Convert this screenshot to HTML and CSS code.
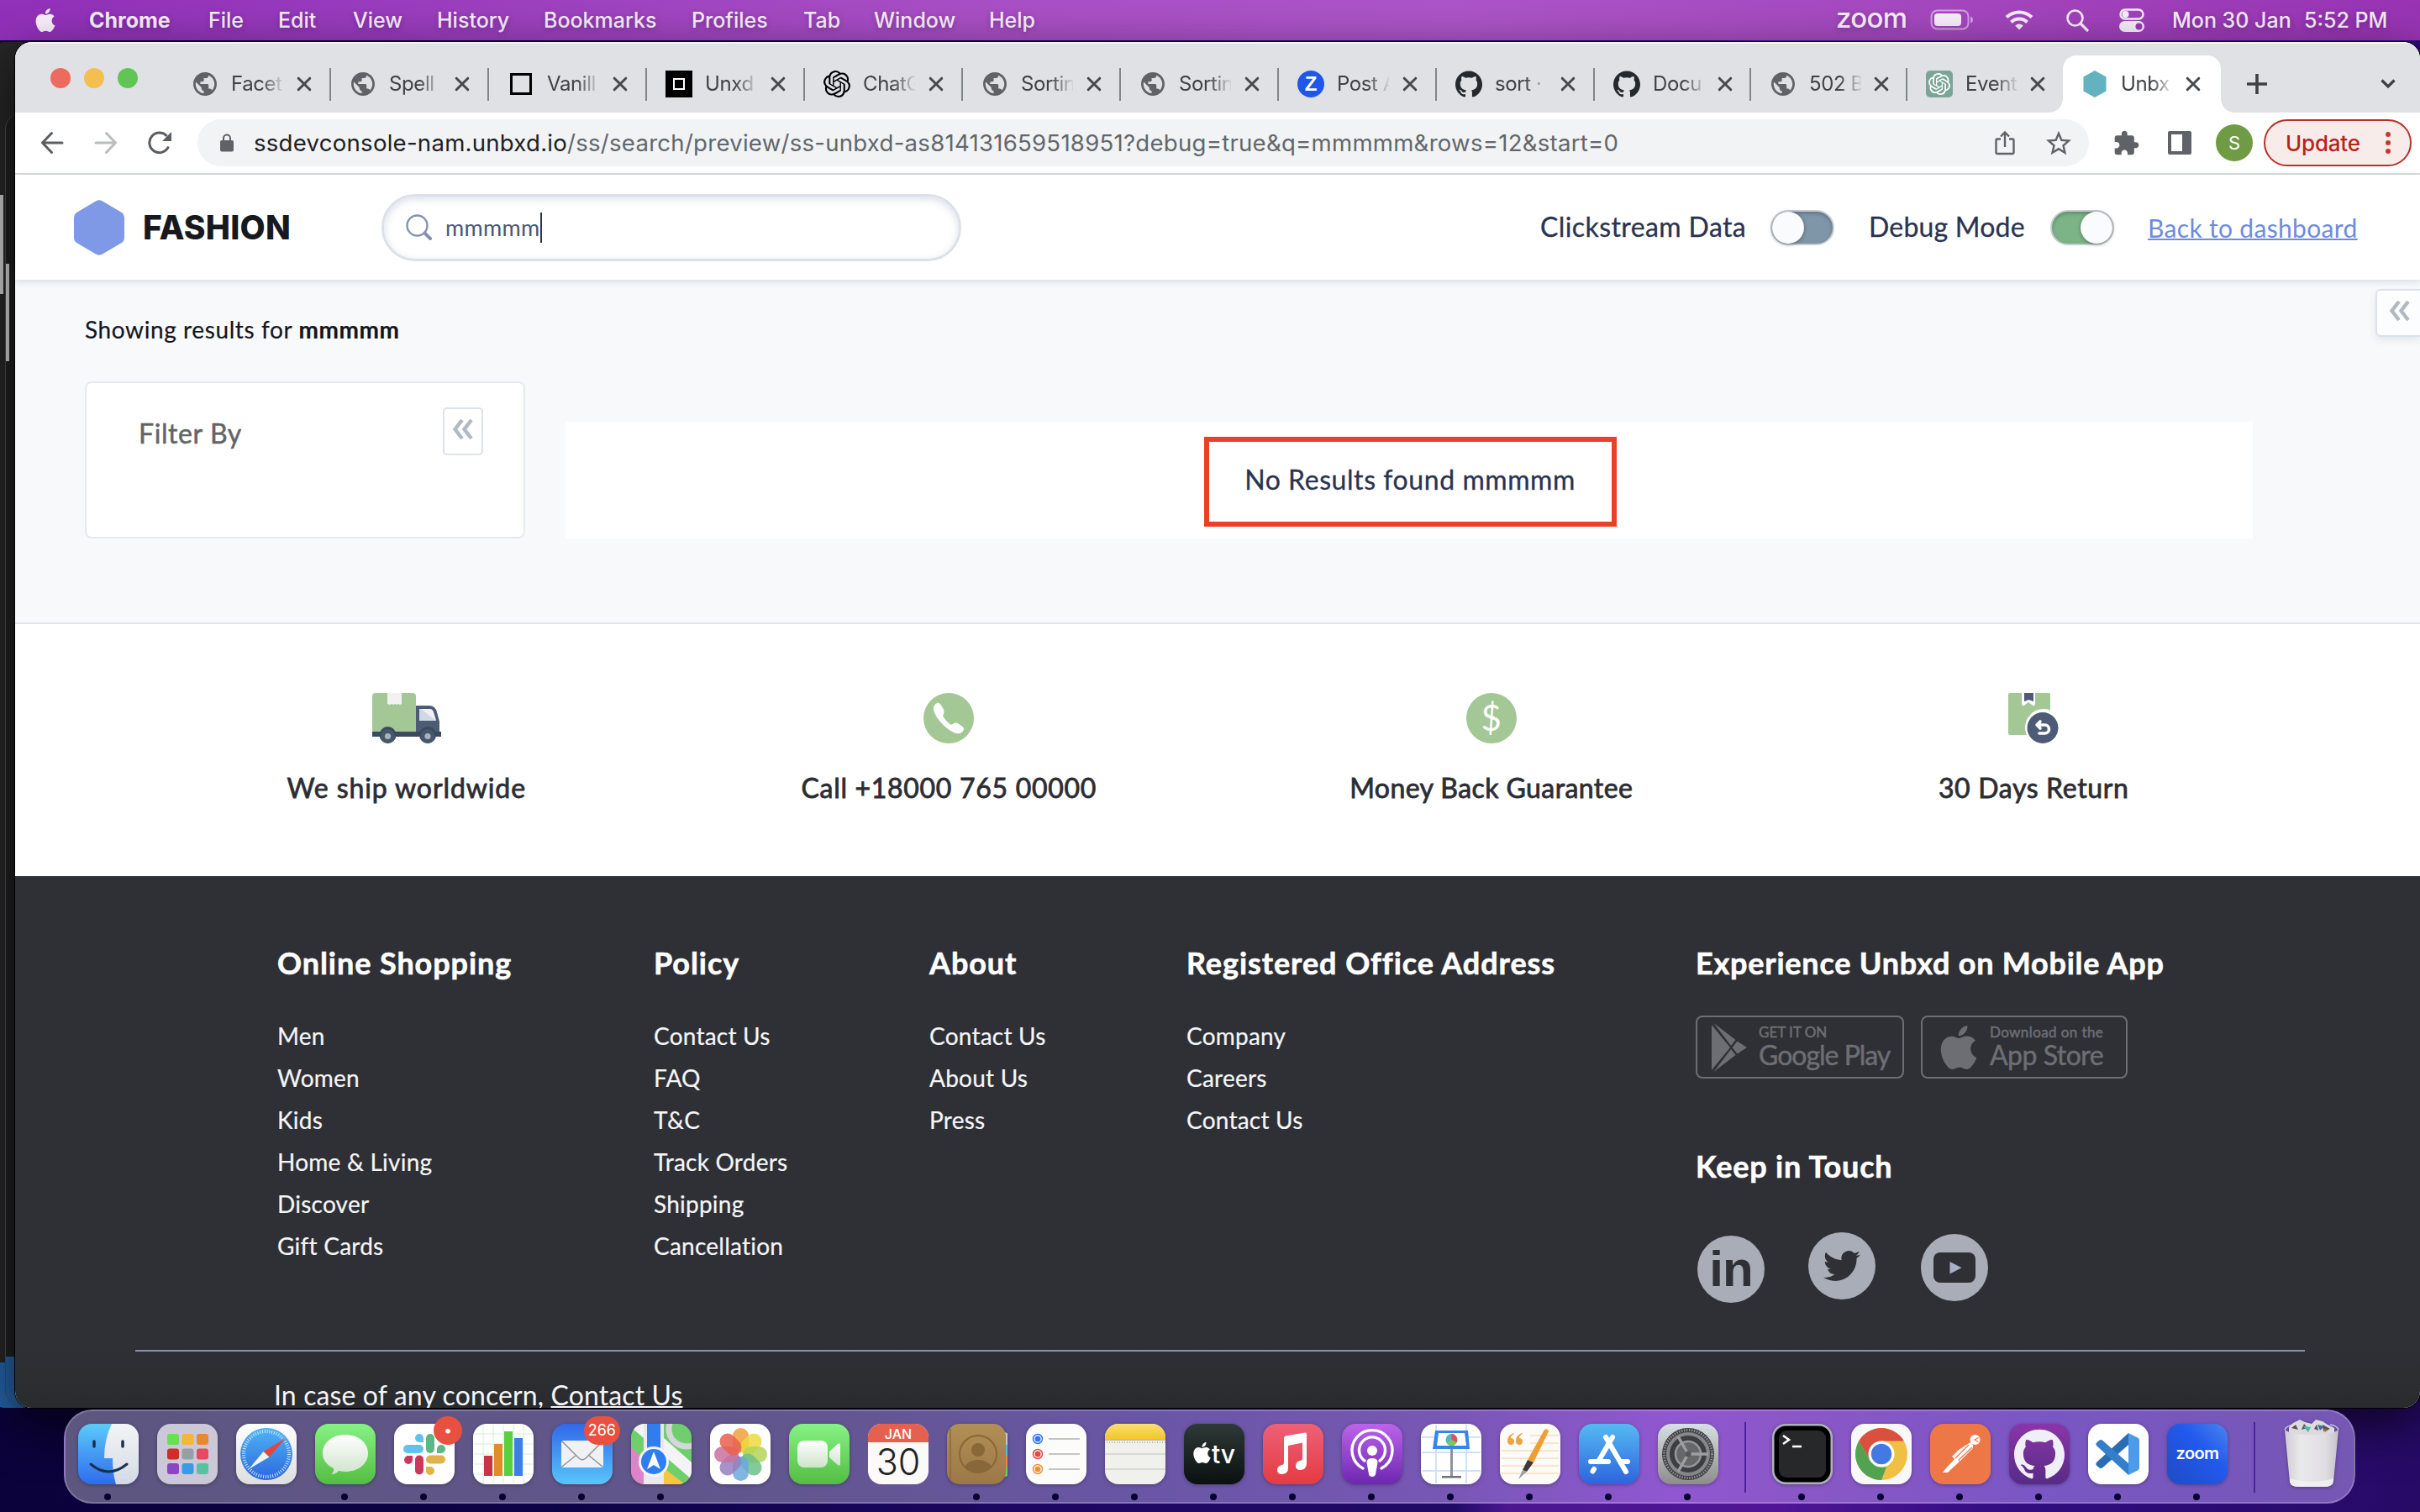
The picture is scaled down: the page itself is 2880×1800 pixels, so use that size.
FILE: index.html
```html
<!DOCTYPE html>
<html lang="en">
<head>
<meta charset="utf-8">
<title>Unbxd Fashion</title>
<link rel="stylesheet" href="styles.css">
</head>
<body>
<svg class="defs" width="0" height="0" aria-hidden="true">
  <defs>
    <symbol id="apple" viewBox="0 0 24 24"><path d="M12.152 6.896c-.948 0-2.415-1.078-3.96-1.04-2.04.027-3.91 1.183-4.961 3.014-2.117 3.675-.546 9.103 1.519 12.09 1.013 1.454 2.208 3.09 3.792 3.039 1.52-.065 2.09-.987 3.935-.987 1.831 0 2.35.987 3.96.948 1.637-.026 2.676-1.48 3.676-2.948 1.156-1.688 1.636-3.325 1.662-3.415-.039-.013-3.182-1.221-3.22-4.857-.026-3.04 2.48-4.494 2.597-4.559-1.429-2.09-3.623-2.324-4.39-2.376-2-.156-3.675 1.09-4.61 1.09zM15.53 3.83c.843-1.012 1.4-2.427 1.245-3.83-1.207.052-2.662.805-3.532 1.818-.78.896-1.454 2.338-1.273 3.714 1.338.104 2.715-.688 3.559-1.701"/></symbol>
    <symbol id="globe" viewBox="2 2 20 20"><path d="M12 2C6.48 2 2 6.48 2 12s4.480 10 10 10 10-4.480 10-10S17.520 2 12 2zm-1 17.930c-3.950-.490-7-3.850-7-7.930 0-.620.080-1.210.210-1.790L9 15v1c0 1.100.900 2 2 2v1.930zm6.900-2.540c-.260-.810-1-1.390-1.900-1.390h-1v-3c0-.550-.450-1-1-1H8v-2h2c.550 0 1-.450 1-1V7h2c1.100 0 2-.900 2-2v-.410c2.930 1.190 5 4.060 5 7.410 0 2.080-.800 3.970-2.100 5.390z"/></symbol>
    <symbol id="github" viewBox="0 0 24 24"><path d="M12 .297c-6.63 0-12 5.373-12 12 0 5.303 3.438 9.8 8.205 11.385.6.113.82-.258.82-.577 0-.285-.01-1.04-.015-2.04-3.338.724-4.042-1.61-4.042-1.61C4.422 18.07 3.633 17.7 3.633 17.7c-1.087-.744.084-.729.084-.729 1.205.084 1.838 1.236 1.838 1.236 1.07 1.835 2.809 1.305 3.495.998.108-.776.417-1.305.76-1.605-2.665-.3-5.466-1.332-5.466-5.93 0-1.31.465-2.38 1.235-3.22-.135-.303-.54-1.523.105-3.176 0 0 1.005-.322 3.3 1.23.96-.267 1.98-.399 3-.405 1.02.006 2.04.138 3 .405 2.28-1.552 3.285-1.23 3.285-1.23.645 1.653.24 2.873.12 3.176.765.84 1.23 1.91 1.23 3.22 0 4.61-2.805 5.625-5.475 5.92.42.36.81 1.096.81 2.22 0 1.606-.015 2.896-.015 3.286 0 .315.21.69.825.57C20.565 22.092 24 17.592 24 12.297c0-6.627-5.373-12-12-12"/></symbol>
    <symbol id="openai" viewBox="0 0 24 24"><path d="M22.2819 9.8211a5.9847 5.9847 0 0 0-.5157-4.9108 6.0462 6.0462 0 0 0-6.5098-2.9A6.0651 6.0651 0 0 0 4.9807 4.1818a5.9847 5.9847 0 0 0-3.9977 2.9 6.0462 6.0462 0 0 0 .7427 7.0966 5.98 5.98 0 0 0 .511 4.9107 6.051 6.051 0 0 0 6.5146 2.9001A5.9847 5.9847 0 0 0 13.2599 24a6.0557 6.0557 0 0 0 5.7718-4.2058 5.9894 5.9894 0 0 0 3.9977-2.9001 6.0557 6.0557 0 0 0-.7475-7.0729zm-9.022 12.6081a4.4755 4.4755 0 0 1-2.8764-1.0408l.1419-.0804 4.7783-2.7582a.7948.7948 0 0 0 .3927-.6813v-6.7369l2.02 1.1686a.071.071 0 0 1 .038.052v5.5826a4.504 4.504 0 0 1-4.4945 4.4944zm-9.6607-4.1254a4.4708 4.4708 0 0 1-.5346-3.0137l.142.0852 4.783 2.7582a.7712.7712 0 0 0 .7806 0l5.8428-3.3685v2.3324a.0804.0804 0 0 1-.0332.0615L9.74 19.9502a4.4992 4.4992 0 0 1-6.1408-1.6464zM2.3408 7.8956a4.485 4.485 0 0 1 2.3655-1.9728V11.6a.7664.7664 0 0 0 .3879.6765l5.8144 3.3543-2.0201 1.1685a.0757.0757 0 0 1-.071 0l-4.8303-2.7865A4.504 4.504 0 0 1 2.3408 7.872zm16.5963 3.8558L13.1038 8.364 15.1192 7.2a.0757.0757 0 0 1 .071 0l4.8303 2.7913a4.4944 4.4944 0 0 1-.6765 8.1042v-5.6772a.79.79 0 0 0-.407-.667zm2.0107-3.0231l-.142-.0852-4.7735-2.7818a.7759.7759 0 0 0-.7854 0L9.409 9.2297V6.8974a.0662.0662 0 0 1 .0284-.0615l4.8303-2.7866a4.4992 4.4992 0 0 1 6.6802 4.66zM8.3065 12.863l-2.02-1.1638a.0804.0804 0 0 1-.038-.0567V6.0742a4.4992 4.4992 0 0 1 7.3757-3.4537l-.142.0805L8.704 5.459a.7948.7948 0 0 0-.3927.6813zm1.0976-2.3654l2.602-1.4998 2.6069 1.4998v2.9994l-2.5974 1.4997-2.6067-1.4997Z"/></symbol>
    <symbol id="close" viewBox="0 0 18 18"><path d="M2.200 2.200l13.600 13.600M15.800 2.200L2.200 15.800" fill="none" stroke="currentColor" stroke-width="3" stroke-linecap="round"/></symbol>
    <symbol id="collapse" viewBox="0 0 24 24"><path d="M11 1L2.500 12l8.500 11M22 1l-8.500 11 8.500 11" fill="none" stroke="currentColor" stroke-width="4.400"/></symbol>
    <linearGradient id="gFinder" x2="0" y2="1"><stop stop-color="#5ccbf9"/><stop offset="1" stop-color="#2f6bee"/></linearGradient>
    <linearGradient id="gGrey" x2="0" y2="1"><stop stop-color="#f4f4f6"/><stop offset="1" stop-color="#d3dae6"/></linearGradient>
    <linearGradient id="gGreen" x2="0" y2="1"><stop stop-color="#86f283"/><stop offset="1" stop-color="#53bd43"/></linearGradient>
    <linearGradient id="gWhite" x2="0" y2="1"><stop stop-color="#ffffff"/><stop offset="1" stop-color="#cfe3cc"/></linearGradient>
    <linearGradient id="gPaper" x2="0" y2="1"><stop stop-color="#ffffff"/><stop offset="1" stop-color="#dedede"/></linearGradient>
    <linearGradient id="gMail" x2="0" y2="1"><stop stop-color="#3168ea"/><stop offset="1" stop-color="#59c5fa"/></linearGradient>
    <linearGradient id="gSafari" x2="0" y2="1"><stop stop-color="#4fb4f5"/><stop offset="1" stop-color="#2c67dd"/></linearGradient>
    <linearGradient id="gTan" x2="0" y2="1"><stop stop-color="#b28f56"/><stop offset="1" stop-color="#9b7846"/></linearGradient>
    <linearGradient id="gTv" x2="0" y2="1"><stop stop-color="#2d3a37"/><stop offset="1" stop-color="#0b0f10"/></linearGradient>
    <linearGradient id="gMusic" x2="0" y2="1"><stop stop-color="#ed6178"/><stop offset="1" stop-color="#e43b41"/></linearGradient>
    <linearGradient id="gPod" x2="0" y2="1"><stop stop-color="#bb64ea"/><stop offset="1" stop-color="#6d27b0"/></linearGradient>
    <linearGradient id="gStore" x2="0" y2="1"><stop stop-color="#56b9f3"/><stop offset="1" stop-color="#2d64dc"/></linearGradient>
    <linearGradient id="gSet" x2="0" y2="1"><stop stop-color="#d7dfe4"/><stop offset="1" stop-color="#8d8d8b"/></linearGradient>
    <linearGradient id="gYellow" x2="0" y2="1"><stop stop-color="#fadf72"/><stop offset="1" stop-color="#f3c52e"/></linearGradient>
    <linearGradient id="gGit" x2="0" y2="1"><stop stop-color="#8a36a8"/><stop offset="1" stop-color="#572b86"/></linearGradient>
    <linearGradient id="gZoom" x1="1" y1="0" x2="0" y2="1"><stop stop-color="#4a85ee"/><stop offset=".4" stop-color="#2259ee"/><stop offset="1" stop-color="#1e4cc4"/></linearGradient>
    <linearGradient id="gTrash"><stop stop-color="#cfcdd2"/><stop offset=".3" stop-color="#e9e8ea"/><stop offset=".75" stop-color="#e0dee2"/><stop offset="1" stop-color="#c4c1ca"/></linearGradient>
    <clipPath id="tile"><rect width="72" height="72" rx="16"/></clipPath>
  </defs>
</svg>

<nav class="menubar">
  <svg class="menubar-apple" width="28" height="32"><use href="#apple"/></svg>
  <span class="menu menu-app">Chrome</span>
  <span class="menu menu-file">File</span>
  <span class="menu menu-edit">Edit</span>
  <span class="menu menu-view">View</span>
  <span class="menu menu-history">History</span>
  <span class="menu menu-bookmarks">Bookmarks</span>
  <span class="menu menu-profiles">Profiles</span>
  <span class="menu menu-tab">Tab</span>
  <span class="menu menu-window">Window</span>
  <span class="menu menu-help">Help</span>
  <div class="status">
    <span class="status-zoom">zoom</span>
    <svg class="status-battery" width="52" height="26" viewBox="0 0 52 26"><rect x="1.500" y="1.500" width="44" height="22" rx="7" fill="none" stroke="#fff" stroke-opacity=".5" stroke-width="2"/><rect x="5" y="5" width="32" height="15" rx="4" fill="#f8effb"/><path d="M48 8.500q3 1 3 4t-3 4z" fill="#fff" fill-opacity=".5"/></svg>
    <svg class="status-wifi" width="34" height="26" viewBox="0 0 34 26" fill="none" stroke="#f8effb" stroke-width="4"><path d="M2 9.500a21.500 21.500 0 0 1 30 0M7.500 15.500a13.500 13.500 0 0 1 19 0"/><path d="M17 24.500l-4.800-5a7 7 0 0 1 9.600 0z" fill="#f8effb" stroke="none"/></svg>
    <svg class="status-search" width="28" height="28" viewBox="0 0 28 28" fill="none" stroke="#f8effb" stroke-width="2.600"><circle cx="11.500" cy="11.500" r="9"/><path d="M18 18l8 8" stroke-width="3.200" stroke-linecap="round"/></svg>
    <svg class="status-control" width="30" height="28" viewBox="0 0 30 28"><rect x="1.500" y="1.500" width="27" height="11" rx="5.500" fill="none" stroke="#f8effb" stroke-width="2.400"/><circle cx="7.500" cy="7" r="4" fill="#f8effb"/><rect y="15" width="30" height="13" rx="6.500" fill="#f8effb"/><circle cx="23.500" cy="21.500" r="4" fill="#9a3bb6"/></svg>
    <span class="status-date">Mon 30 Jan</span>
    <span class="status-time">5:52 PM</span>
  </div>
</nav>

<div class="back-window back-far"></div>
<div class="back-window back-near"></div>

<main class="window">
  <div class="tabstrip">
    <div class="lights"><i class="light light-red"></i><i class="light light-amber"></i><i class="light light-green"></i></div>
    <div class="tab"><svg class="fav fav-globe"><use href="#globe"/></svg><span class="tab-title">Facet</span><svg class="tab-close"><use href="#close"/></svg></div>
    <div class="tab"><svg class="fav fav-globe"><use href="#globe"/></svg><span class="tab-title">Spell</span><svg class="tab-close"><use href="#close"/></svg></div>
    <div class="tab"><i class="fav fav-square"></i><span class="tab-title">Vanill</span><svg class="tab-close"><use href="#close"/></svg></div>
    <div class="tab"><i class="fav fav-unxd"></i><span class="tab-title">Unxd</span><svg class="tab-close"><use href="#close"/></svg></div>
    <div class="tab"><svg class="fav"><use href="#openai"/></svg><span class="tab-title">ChatG</span><svg class="tab-close"><use href="#close"/></svg></div>
    <div class="tab"><svg class="fav fav-globe"><use href="#globe"/></svg><span class="tab-title">Sortin</span><svg class="tab-close"><use href="#close"/></svg></div>
    <div class="tab"><svg class="fav fav-globe"><use href="#globe"/></svg><span class="tab-title">Sortin</span><svg class="tab-close"><use href="#close"/></svg></div>
    <div class="tab"><b class="fav fav-z">Z</b><span class="tab-title">Post A</span><svg class="tab-close"><use href="#close"/></svg></div>
    <div class="tab"><svg class="fav fav-git"><use href="#github"/></svg><span class="tab-title">sort ·</span><svg class="tab-close"><use href="#close"/></svg></div>
    <div class="tab tab-narrow"><svg class="fav fav-git"><use href="#github"/></svg><span class="tab-title">Docu</span><svg class="tab-close"><use href="#close"/></svg></div>
    <div class="tab tab-narrow"><svg class="fav fav-globe"><use href="#globe"/></svg><span class="tab-title">502 B</span><svg class="tab-close"><use href="#close"/></svg></div>
    <div class="tab tab-narrow tab-last"><span class="fav fav-ai"><svg width="26" height="26"><use href="#openai"/></svg></span><span class="tab-title">Event</span><svg class="tab-close"><use href="#close"/></svg></div>
    <div class="tab tab-active"><svg class="fav" viewBox="0 0 32 32"><path d="M16 0l13.500 7.500v17L16 32 2.500 24.500v-17z" fill="#63b2bf"/></svg><span class="tab-title">Unbx</span><svg class="tab-close"><use href="#close"/></svg></div>
    <svg class="tab-new" width="24" height="24" viewBox="0 0 24 24"><path d="M12 0v24M0 12h24" stroke="#3c4043" stroke-width="3.600"/></svg>
    <svg class="tab-menu" width="18" height="12" viewBox="0 0 18 12"><path d="M1.500 1.500L9 9l7.500-7.500" fill="none" stroke="#3c4043" stroke-width="3.200"/></svg>
  </div>

  <div class="toolbar">
    <svg class="nav-icon" viewBox="0 0 28 28" fill="none" stroke="#5a5e63" stroke-width="3" stroke-linecap="round" stroke-linejoin="round"><path d="M26 14H3M13.500 2.500L2.500 14l11 11.500"/></svg>
    <svg class="nav-icon" viewBox="0 0 28 28" fill="none" stroke="#babcbe" stroke-width="3" stroke-linecap="round" stroke-linejoin="round"><path d="M2 14h23M14.500 2.500l11 11.500-11 11.500"/></svg>
    <svg class="nav-icon nav-reload" viewBox="0 0 28 28"><path d="M24.500 18.500A11.800 11.800 0 1 1 22.500 6" fill="none" stroke="#5a5e63" stroke-width="3"/><path d="M28 1v11H17z" fill="#5a5e63"/></svg>
    <div class="omnibox">
      <svg width="18" height="22" viewBox="0 0 18 22"><path d="M5 9V5.500a4 4 0 0 1 8 0V9" fill="none" stroke="#5f6368" stroke-width="2"/><rect x="1" y="8" width="16" height="13.500" rx="2" fill="#5f6368"/></svg>
      <span class="url"><span class="url-host">ssdevconsole-nam.unbxd.io</span>/ss/search/preview/ss-unbxd-as814131659518951?debug=true&amp;q=mmmmm&amp;rows=12&amp;start=0</span>
      <svg class="omni-share" width="24" height="30" viewBox="0 0 24 30" fill="none" stroke="#5f6368" stroke-width="2.400"><path d="M7 10.500H3a1.500 1.500 0 0 0-1.500 1.500v14.500A1.500 1.500 0 0 0 3 28h18a1.500 1.500 0 0 0 1.500-1.500V12a1.500 1.500 0 0 0-1.500-1.500h-4M12 20V3M7 7.500l5-5 5 5"/></svg>
      <svg class="omni-star" width="30" height="30" viewBox="2 1.500 20 20"><path d="M22 9.240l-7.190-.620L12 2 9.190 8.630 2 9.240l5.460 4.730L5.820 21 12 17.270 18.180 21l-1.630-7.030L22 9.240zM12 15.400l-3.760 2.270 1-4.280-3.320-2.880 4.380-.380L12 6.100l1.710 4.040 4.380.380-3.320 2.880 1 4.280L12 15.400z" fill="#5f6368"/></svg>
    </div>
    <svg class="ext" width="30" height="30" viewBox="1.500 .5 22 22"><path d="M20.500 11H19V7c0-1.100-.900-2-2-2h-4V3.500C13 2.120 11.880 1 10.500 1S8 2.120 8 3.500V5H4c-1.100 0-1.990.900-1.990 2v3.800H3.500c1.490 0 2.700 1.210 2.700 2.700s-1.210 2.700-2.700 2.700H2V20c0 1.100.900 2 2 2h3.800v-1.500c0-1.490 1.210-2.700 2.700-2.700 1.490 0 2.700 1.210 2.700 2.700V22H17c1.100 0 2-.900 2-2v-4h1.500c1.380 0 2.500-1.120 2.500-2.500S21.880 11 20.500 11z" fill="#5f6368"/></svg>
    <i class="panel"></i>
    <span class="avatar">S</span>
    <div class="update"><span class="update-text">Update</span><i class="dots"><i></i><i></i><i></i></i></div>
  </div>

  <header class="site-header">
    <svg class="brand-mark" width="60" height="66" viewBox="0 0 60 66"><path d="M26 1.500q4-2.300 8 0l22 13q4 2.300 4 6.500v24q0 4.200-4 6.500l-22 13q-4 2.300-8 0l-22-13q-4-2.300-4-6.500V21q0-4.200 4-6.500z" fill="#7f99e6"/></svg>
    <span class="brand">FASHION</span>
    <div class="search">
      <svg width="32" height="32" viewBox="0 0 32 32" fill="none" stroke="#8492b0" stroke-width="2.400"><circle cx="13.500" cy="13.500" r="12"/><path d="M22.500 22.500l6.500 6.500" stroke-width="4" stroke-linecap="round"/></svg>
      <span class="query">mmmmm</span><i class="caret"></i>
    </div>
    <span class="switch-label label-click">Clickstream Data</span>
    <i class="switch"></i>
    <span class="switch-label label-debug">Debug Mode</span>
    <i class="switch switch-on"></i>
    <a class="back-link">Back to dashboard</a>
  </header>

  <section class="results">
    <p class="showing">Showing results for <b>mmmmm</b></p>
    <div class="results-row">
      <aside class="filter">
        <span class="filter-title">Filter By</span>
        <span class="collapse-btn"><svg width="26" height="24"><use href="#collapse"/></svg></span>
      </aside>
      <div class="empty"><div class="callout">No Results found mmmmm</div></div>
    </div>
    <span class="side-tab"><svg width="26" height="24"><use href="#collapse"/></svg></span>
  </section>

  <section class="features">
    <div class="feature">
      <svg width="82" height="60" viewBox="0 0 82 60"><path d="M0 46V4q0-4 4-4h44q4 0 4 4v42z" fill="#a3c795"/><path d="M18 0h17v13l-2 1-2-1-2 1-2-1-2 1-2-1-2 1-3-1z" fill="#f2f2f2"/><path d="M52 15h16q7 0 9 8l3 11v12H52z" fill="#4e5b76"/><path d="M56 19h12q4 0 5 4l3 10H56z" fill="#d0d8e6"/><path d="M58 19h10q4 0 5 4l3 10z" fill="#eef0f4"/><path d="M0 46h82v6H0z" fill="#3b4a5e"/><circle cx="18.500" cy="50" r="10" fill="#3b4a5e"/><circle cx="66" cy="50" r="10" fill="#3b4a5e"/><circle cx="18.500" cy="51.500" r="8.500" fill="#46586c"/><circle cx="66" cy="51.500" r="8.500" fill="#46586c"/><circle cx="18.500" cy="51.500" r="3.600" fill="#aab2bc"/><circle cx="66" cy="51.500" r="3.600" fill="#aab2bc"/></svg>
      <span class="feature-text ft-ship">We ship worldwide</span>
    </div>
    <div class="feature">
      <svg width="60" height="60" viewBox="0 0 60 60"><circle cx="30" cy="30" r="30" fill="#a3c795"/><path d="M17 11.500q2.500 0 4 3l3 5q1.500 3-.5 6-1 2 2 5.500 3 4 6 6 2 1.500 4-.5 3-2 6 0l5 3.500q2.500 2 1 4.500-3 5-8.500 3.500-7.500-2-16-10.500-9-9-11-17.500-.8-6 5-8.500z" fill="#fff"/></svg>
      <span class="feature-text ft-call">Call +18000 765 00000</span>
    </div>
    <div class="feature">
      <span class="dollar">$</span>
      <span class="feature-text ft-money">Money Back Guarantee</span>
    </div>
    <div class="feature">
      <svg width="60" height="60" viewBox="0 0 60 60"><path d="M2 0h14v13q1 4 4 1l4-3 4 3q3 3 4-1V0h16q2 0 2 2v18.500a22 22 0 0 0-28 29.500H2q-2 0-2-2V2q0-2 2-2z" fill="#a3c795"/><path d="M19 0h11v10l-5.500-2L19 10z" fill="#4e5b76"/><circle cx="41" cy="41.500" r="18.500" fill="#4e5b76"/><path d="M38 34l-4 4 4 4M35 38h8.500a4.800 4.800 0 0 1 0 10H37" fill="none" stroke="#fff" stroke-width="3.600" stroke-linecap="round" stroke-linejoin="round"/></svg>
      <span class="feature-text ft-return">30 Days Return</span>
    </div>
  </section>

  <footer class="footer">
    <div class="footer-cols">
      <div class="col"><h3 class="h-shop">Online Shopping</h3><a>Men</a><a>Women</a><a>Kids</a><a>Home &amp; Living</a><a>Discover</a><a>Gift Cards</a></div>
      <div class="col"><h3 class="h-policy">Policy</h3><a>Contact Us</a><a>FAQ</a><a>T&amp;C</a><a>Track Orders</a><a>Shipping</a><a>Cancellation</a></div>
      <div class="col"><h3 class="h-about">About</h3><a>Contact Us</a><a>About Us</a><a>Press</a></div>
      <div class="col"><h3 class="h-office">Registered Office Address</h3><a>Company</a><a>Careers</a><a>Contact Us</a></div>
      <div class="col">
        <h3 class="h-app">Experience Unbxd on Mobile App</h3>
        <div class="badges">
          <div class="badge badge-play">
            <svg width="42" height="58" viewBox="0 0 42 58" fill="#6d6e73"><path d="M0 2l22 27L0 56zM2.500 0l26 20-5.500 7zM2.500 58l26-20-5.500-7zM30.500 21.500L42 29l-11.500 7.500-6-7.500z"/></svg>
            <span class="badge-text"><small class="play-small">GET IT ON</small><span class="play-big">Google Play</span></span>
          </div>
          <div class="badge badge-store">
            <svg width="52" height="52" fill="#6d6e73"><use href="#apple"/></svg>
            <span class="badge-text"><small class="store-small">Download on the</small><span class="store-big">App Store</span></span>
          </div>
        </div>
        <h3 class="h-touch">Keep in Touch</h3>
        <div class="social">
          <span class="soc soc-in">in</span>
          <span class="soc soc-tw"><svg width="44" height="44" viewBox="0 0 24 24" fill="#2f3036"><path d="M23.953 4.570a10 10 0 01-2.825.775 4.958 4.958 0 002.163-2.723c-.951.555-2.005.959-3.127 1.184a4.920 4.920 0 00-8.384 4.482C7.690 8.095 4.067 6.130 1.640 3.162a4.822 4.822 0 00-.666 2.475c0 1.710.870 3.213 2.188 4.096a4.904 4.904 0 01-2.228-.616v.060a4.923 4.923 0 003.946 4.827 4.996 4.996 0 01-2.212.085 4.936 4.936 0 004.604 3.417 9.867 9.867 0 01-6.102 2.105c-.390 0-.779-.023-1.170-.067a13.995 13.995 0 007.557 2.209c9.053 0 13.998-7.496 13.998-13.985 0-.210 0-.420-.015-.630A9.935 9.935 0 0024 4.590z"/></svg></span>
          <span class="soc soc-yt"><svg width="50" height="36" viewBox="0 0 50 36"><rect width="50" height="36" rx="8" fill="#2f3036"/><path d="M19.500 11l14 7.300-14 7.300z" fill="#a9b0cc"/></svg></span>
        </div>
      </div>
    </div>
    <hr class="rule">
    <p class="concern">In case of any concern, <u>Contact Us</u></p>
  </footer>
</main>

<div class="dock">
  <div class="app on"><svg viewBox="0 0 72 72"><g clip-path="url(#tile)"><path d="M0 0h72v72H0z" fill="url(#gFinder)"/><path d="M40 0q-9 18-9 41h10q0 18 4 31h27V0z" fill="url(#gGrey)"/></g><path d="M19 21v6M53 21v6" stroke="#16314f" stroke-width="3.500" stroke-linecap="round"/><path d="M15 48q21 18 43 0" fill="none" stroke="#16314f" stroke-width="3" stroke-linecap="round"/></svg></div>
  <div class="app"><svg viewBox="0 0 72 72"><rect width="72" height="72" rx="16" fill="#cbc8d8"/><g><rect x="12" y="12" width="14" height="13" rx="3" fill="#69df57"/><rect x="29.500" y="12" width="14" height="13" rx="3" fill="#f0b83a"/><rect x="47" y="12" width="14" height="13" rx="3" fill="#e48a35"/><rect x="12" y="29.500" width="14" height="13" rx="3" fill="#cf2e29"/><rect x="29.500" y="29.500" width="14" height="13" rx="3" fill="#96a0a4"/><rect x="47" y="29.500" width="14" height="13" rx="3" fill="#e84960"/><rect x="12" y="47" width="14" height="13" rx="3" fill="#8b44c6"/><rect x="29.500" y="47" width="14" height="13" rx="3" fill="#389be8"/><rect x="47" y="47" width="14" height="13" rx="3" fill="#55c3a2"/></g></svg></div>
  <div class="app"><svg viewBox="0 0 72 72"><rect width="72" height="72" rx="16" fill="url(#gPaper)"/><circle cx="36" cy="36" r="31" fill="url(#gSafari)"/><circle cx="36" cy="36" r="27" fill="none" stroke="#cfe6fb" stroke-width="4" stroke-dasharray="1 1.830"/><path d="M59 17L39.500 39.500l-7-6.500z" fill="#e2463c"/><path d="M15 54l17.500-21 7 6.500z" fill="#f3f3f5"/></svg></div>
  <div class="app on"><svg viewBox="0 0 72 72"><rect width="72" height="72" rx="16" fill="url(#gGreen)"/><path d="M36 13c15 0 27 9 27 22s-12 22-27 22q-4 0-8-1-3 4-9 4 4-3 3-7C14 49 9 43 9 35c0-13 12-22 27-22z" fill="url(#gWhite)"/></svg></div>
  <div class="app on"><svg viewBox="0 0 72 72"><rect width="72" height="72" rx="16" fill="#fff"/><g stroke-width="10" stroke-linecap="round" fill="none"><path d="M43 17v13" stroke="#5cb784"/><path d="M16 30h14" stroke="#62c3ea"/><path d="M30 42.500v13" stroke="#ce375c"/><path d="M43 42.500h13" stroke="#e2b34b"/></g><path d="M35 22h-5a5 5 0 1 1 5-5z" fill="#62c3ea"/><path d="M51 35v-5a5 5 0 1 1 5 5z" fill="#5cb784"/><path d="M22 38v5a5 5 0 1 1-5-5z" fill="#ce375c"/><path d="M38 51h5a5 5 0 1 1-5 5z" fill="#e2b34b"/></svg><b class="count count-dot">•</b></div>
  <div class="app on"><svg viewBox="0 0 72 72"><rect width="72" height="72" rx="16" fill="#fff"/><path d="M12 1v70M24 1v70M36 1v70M48 1v70M60 1v70M1 12h70M1 24h70M1 36h70M1 48h70M1 60h70" stroke="#d4f0d2" stroke-width="1"/><rect x="13" y="38" width="10" height="24" fill="#c93345"/><rect x="25" y="24" width="10" height="38" fill="#e18c2b"/><rect x="37" y="9" width="10" height="53" fill="#57cf3e"/><rect x="49" y="17" width="10" height="45" fill="#3a80ea"/></svg></div>
  <div class="app on"><svg viewBox="0 0 72 72"><rect width="72" height="72" rx="16" fill="url(#gMail)"/><rect x="11" y="20" width="50" height="32" rx="3" fill="#f0f1f2"/><path d="M12 21l20 20q4 3.500 8 0l20-20M12 51l17-14M60 51L43 37" fill="none" stroke="#8e9499" stroke-width="1.500"/></svg><b class="count">266</b></div>
  <div class="app on"><svg viewBox="0 0 72 72"><g clip-path="url(#tile)"><path d="M0 0h72v72H0z" fill="#6fd06b"/><path d="M0 4l72 62v-20L20 0H0z" fill="#f4f4f6"/><path d="M0 28l24 22v22H0z" fill="#dd83c8"/><path d="M38 52l26 20H38z" fill="#f5c740"/><path d="M15 0h24v72H15z" fill="#e9e9ee"/><path d="M19 0h16v40H19z" fill="#2f7df0"/><circle cx="66" cy="6" r="21" fill="none" stroke="#d5d5da" stroke-width="7"/></g><circle cx="27" cy="45" r="18" fill="#f4f4f6"/><circle cx="27" cy="45" r="15" fill="#2f7df0"/><path d="M27 33l8 21-8-5-8 5z" fill="#fff"/></svg></div>
  <div class="app"><svg viewBox="0 0 72 72"><rect width="72" height="72" rx="16" fill="#fff"/><g fill-opacity=".85"><rect x="27" y="5" width="19" height="29" rx="9.500" fill="#f0a03c"/><rect x="27" y="5" width="19" height="29" rx="9.500" fill="#ecd93d" transform="rotate(45 36.500 36.500)"/><rect x="27" y="5" width="19" height="29" rx="9.500" fill="#b3d358" transform="rotate(90 36.500 36.500)"/><rect x="27" y="5" width="19" height="29" rx="9.500" fill="#6dbf88" transform="rotate(135 36.500 36.500)"/><rect x="27" y="5" width="19" height="29" rx="9.500" fill="#6aa9dc" transform="rotate(180 36.500 36.500)"/><rect x="27" y="5" width="19" height="29" rx="9.500" fill="#957fc0" transform="rotate(225 36.500 36.500)"/><rect x="27" y="5" width="19" height="29" rx="9.500" fill="#c9719f" transform="rotate(270 36.500 36.500)"/><rect x="27" y="5" width="19" height="29" rx="9.500" fill="#ea5f4c" transform="rotate(315 36.500 36.500)"/></g></svg></div>
  <div class="app"><svg viewBox="0 0 72 72"><rect width="72" height="72" rx="16" fill="url(#gGreen)"/><rect x="10" y="20" width="36" height="32" rx="8" fill="url(#gWhite)"/><path d="M48 33l10-9q3-2 3 1v23q0 3-3 1l-10-9z" fill="url(#gWhite)"/></svg></div>
  <div class="app calendar"><span class="cal-month">JAN</span><span class="cal-day">30</span></div>
  <div class="app on"><svg viewBox="0 0 72 72"><path d="M68 10q5 0 5 5v10h-5z" fill="#c9c9c9"/><path d="M68 25h5v13h-5z" fill="#58b9e8"/><path d="M68 38h5v13h-5z" fill="#e98a35"/><path d="M68 51h5v8q0 4-5 4z" fill="#66cf5a"/><rect width="70" height="72" rx="15" fill="url(#gTan)"/><path d="M4 6v60" stroke="#8a6a3c" stroke-width="1.500"/><circle cx="37" cy="36" r="22" fill="none" stroke="#886738" stroke-width="2"/><circle cx="37" cy="31" r="8" fill="#886738"/><path d="M21 51q5-8 16-8t16 8q-6 7-16 7t-16-7z" fill="#886738"/></svg></div>
  <div class="app on"><svg viewBox="0 0 72 72"><rect width="72" height="72" rx="16" fill="#fcfcfb"/><path d="M27 18h37M27 36h37M27 54h37" stroke="#c5c5c5" stroke-width="2"/><g fill="#fff" stroke-width="1.500"><circle cx="14" cy="18" r="5.500" stroke="#3478f0"/><circle cx="14" cy="36" r="5.500" stroke="#df4b42"/><circle cx="14" cy="54" r="5.500" stroke="#e5953a"/></g><circle cx="14" cy="18" r="3.500" fill="#3478f0"/><circle cx="14" cy="36" r="3.500" fill="#df4b42"/><circle cx="14" cy="54" r="3.500" fill="#e5953a"/></svg></div>
  <div class="app on"><svg viewBox="0 0 72 72"><g clip-path="url(#tile)"><path d="M0 0h72v72H0z" fill="#f0f0ec"/><path d="M0 0h72v18H0z" fill="url(#gYellow)"/><path d="M0 19h72" stroke="#b5ad92" stroke-width="1.500"/><path d="M2 22h70" stroke="#b8b8b4" stroke-width="2" stroke-dasharray="1 2"/><path d="M0 36h72M0 54h72" stroke="#cfcfcb" stroke-width="1.500"/></g></svg></div>
  <div class="app on tv"><svg viewBox="0 0 72 72"><rect width="72" height="72" rx="16" fill="url(#gTv)"/><use href="#apple" x="9" y="21" width="25" height="27" fill="#fff"/></svg><span class="tv-text">tv</span></div>
  <div class="app on"><svg viewBox="0 0 72 72"><rect width="72" height="72" rx="16" fill="url(#gMusic)"/><path d="M25 17q0-2 2-2.500l23-4q2-.300 2 2V47q0 7-7 8-6 .300-6-5 0-5 5-6 3-.500 3-3V22.500l-17 3.500V53q0 6-7 7-6 .300-6-5 0-4.500 5-5.800 3-.700 3-3.200z" fill="#fff"/></svg></div>
  <div class="app on"><svg viewBox="0 0 72 72"><rect width="72" height="72" rx="16" fill="url(#gPod)"/><g fill="none" stroke="#fff" stroke-width="3.400" stroke-linecap="round"><path d="M25 53a24 24 0 1 1 22 0M27 44a15.500 15.500 0 1 1 18 0"/></g><circle cx="36" cy="32" r="6" fill="#fff"/><path d="M29.500 46q0-5 6.500-5t6.500 5L40 60q-.700 3-4 3t-4-3z" fill="#fff"/></svg></div>
  <div class="app on"><svg viewBox="0 0 72 72"><rect width="72" height="72" rx="16" fill="#fff"/><path d="M18 1v70M54 1v70M1 16h70M1 34h70M1 56h70" stroke="#cfe2f5" stroke-width="2"/><path d="M35 30h3v33h-3z" fill="#8d9499"/><path d="M25 62h23v2.500H25z" fill="#6d7377"/><path d="M17 8h39l2 22H14z" fill="#3686e8"/><path d="M21 11h31l2 15H19z" fill="#fff"/><circle cx="36.500" cy="19" r="7" fill="#4db6c9"/><path d="M36.500 19v-7a7 7 0 0 1 6 10z" fill="#e05248"/><path d="M36.500 19l6 3.500a7 7 0 0 1-12 0z" fill="#7cc85a"/></svg></div>
  <div class="app on"><svg viewBox="0 0 72 72"><rect width="72" height="72" rx="16" fill="#fdfbf7"/><path d="M36 14h34M36 23h34M2 32h68M2 41h68M2 50h68M2 59h68" stroke="#f7dfba" stroke-width="1.500"/><path d="M16 11q-7 3-7 9 0 5 4 5t4-4-4-4q0-3 4-5zM26 11q-7 3-7 9 0 5 4 5t4-4-4-4q0-3 4-5z" fill="#eda540"/><path d="M53 7q4-2 5 2L40 46l-7-3z" fill="#ee9f33"/><path d="M33 43l7 3-8 11-5-2z" fill="#3a3a3c"/><path d="M27 55l5 2-10 9z" fill="#9aa0a4"/></svg></div>
  <div class="app on"><svg viewBox="0 0 72 72"><rect width="72" height="72" rx="16" fill="url(#gStore)"/><g stroke="#fff" stroke-width="6" stroke-linecap="round"><path d="M40 16L23 45M32 16l24 41M14 45h21M49 45h9M18 54l-1.500 2.500"/></g></svg></div>
  <div class="app on"><svg viewBox="0 0 72 72"><rect width="72" height="72" rx="16" fill="url(#gSet)"/><circle cx="36" cy="36" r="31" fill="#3c3e3f"/><circle cx="36" cy="36" r="24" fill="none" stroke="#85878a" stroke-width="4"/><circle cx="36" cy="36" r="28.500" fill="none" stroke="#8c8e8f" stroke-width="3" stroke-dasharray="1.500 1.500"/><circle cx="36" cy="36" r="15" fill="#656768" stroke="#95979a" stroke-width="2.500"/><path d="M36 36h24M36 36L24 15M36 36L24 57" stroke="#9c9ea0" stroke-width="3.500"/><circle cx="36" cy="36" r="3.500" fill="#55575a"/></svg></div>
  <i class="dock-sep"></i>
  <div class="app on"><svg viewBox="0 0 72 72"><rect width="72" height="72" rx="16" fill="#aab4b8"/><rect x="2.500" y="2.500" width="67" height="67" rx="14" fill="#000"/><rect x="8" y="8" width="56" height="56" rx="9" fill="#272829"/><path d="M13 14l7 5-7 5" fill="none" stroke="#fff" stroke-width="2.600"/><path d="M24 27h11" stroke="#fff" stroke-width="2.600"/></svg></div>
  <div class="app on"><svg viewBox="0 0 72 72"><rect width="72" height="72" rx="16" fill="#f8f8fb"/><circle cx="36" cy="36" r="31" fill="#f0c044"/><path d="M9.200 20.500A31 31 0 0 1 62.800 20.500H36L22.600 43.700z" fill="#d9503f"/><path d="M9.200 20.500L22.600 43.700 36 51.500h6L36 67A31 31 0 0 1 9.200 20.500z" fill="#52a351"/><circle cx="36" cy="36" r="15.500" fill="#fff"/><circle cx="36" cy="36" r="12.200" fill="#4279e3"/></svg></div>
  <div class="app on"><svg viewBox="0 0 72 72"><rect width="72" height="72" rx="16" fill="#ee7748"/><circle cx="53.500" cy="19" r="6" fill="#fff"/><path d="M57.500 16.500l-4.500 2.500 4.500 2.500" fill="none" stroke="#ee7748" stroke-width="1.200"/><path d="M48 22q5 3 2 8L36 44l-5-1-5-4 5-5 3-3z" fill="#fff"/><path d="M30 41l5 4-12 11-2 2h-6l3-4z" fill="#fff"/><path d="M46 25L30 41M50 28L34 43" stroke="#ee7748" stroke-width="1.200"/></svg></div>
  <div class="app on"><svg viewBox="0 0 72 72"><rect width="72" height="72" rx="16" fill="url(#gGit)"/><use href="#github" x="6" y="6" width="60" height="60" fill="#f0eff5"/></svg></div>
  <div class="app on"><svg viewBox="0 0 72 72"><rect width="72" height="72" rx="16" fill="#fff"/><path d="M48 11L10 46q-1.500 2 0 3.500l3.500 3q2 1 4-.500L48 25z" fill="#2a6db4"/><path d="M48 61L10 26q-1.500-2 0-3.500l3.500-3q2-1 4 .500L48 47z" fill="#357fca"/><path d="M48 11l11 5.500q2 1 2 3v33q0 2-2 3L48 61z" fill="#4b9be9"/></svg></div>
  <div class="app on zoom-app"><svg viewBox="0 0 72 72"><rect width="72" height="72" rx="16" fill="url(#gZoom)"/></svg><span class="zoom-text">zoom</span></div>
  <i class="dock-sep"></i>
  <div class="app"><svg class="trash" viewBox="0 0 72 82"><path d="M9 10l5-5 8-4 6 3 8 2 5-5 8 2 6 4 8 4v10H9z" fill="#dcdadc"/><path d="M12 11l5-4 3 6zM24 13l3-7 4 5zM49 7l9 5-8 3zM39 12l3-5 2 7z" fill="#57515a"/><path d="M26 9l9 1-3 6z" fill="#4ab7b0"/><path d="M43 7l8 2-5 5z" fill="#3f6c9a"/><path d="M50 12l6 1-4 3z" fill="#b06a3b"/><path d="M4 13q8 6 32 6t32-6l-6 62q-1 6-11 6H21q-10 0-11-6z" fill="url(#gTrash)"/><path d="M10 71q26 8 52 0l-.5 4q-1 6-11 6H21q-10 0-11-6z" fill="#f3f2f5" fill-opacity=".8"/><path d="M4 13q2-5 12-6M68 13q-2-5-10-6" fill="none" stroke="#efedf2" stroke-opacity=".7" stroke-width="1.500"/></svg></div>
</div>
</body>
</html>
```
FILE: styles.css
```css
* { box-sizing: border-box; }

body {
  margin: 0;
  width: 2880px;
  height: 1800px;
  overflow: hidden;
  position: relative;
  font-family: Inter, "Liberation Sans", sans-serif;
  background: linear-gradient(100deg, #0a0236 0%, #0d0346 30%, #1d0763 48%, #1f0a66 64%, #4c1690 66%, #4f1596 76%, #310d80 85%, #260a66 100%);
}

i, b.fav { font-style: normal; }
.defs { position: absolute; }

/* Menu bar */
.menubar {
  display: flex;
  align-items: center;
  height: 48px;
  padding: 0 37px 1px 40px;
  color: #f8effb;
  font-size: 25px;
  font-weight: 500;
  text-shadow: 0 2px 6px rgba(60, 0, 90, .35);
  background: linear-gradient(90deg, #9130b9 0%, #a84fc5 40%, #ac55c8 60%, #a548bf 80%, #9834b4 100%);
}
.menubar-apple { width: 28px; margin-right: 38px; fill: #f8effb; }
.menu { white-space: nowrap; }
.menu-app { width: 142px; font-weight: 700; }
.menu-file { width: 83px; }
.menu-edit { width: 89px; }
.menu-view { width: 100px; }
.menu-history { width: 127px; }
.menu-bookmarks { width: 176px; }
.menu-profiles { width: 133px; }
.menu-tab { width: 84px; }
.menu-window { width: 137px; }
.status { display: flex; align-items: center; margin-left: auto; white-space: nowrap; }
.status-zoom { width: 112px; font-size: 33px; font-weight: 500; letter-spacing: -.7px; line-height: 40px; padding-bottom: 6px; }
.status-battery { margin-right: 37px; }
.status-wifi { margin-right: 38px; }
.status-search { margin-right: 36px; }
.status-control { margin-right: 33px; }
.status-date { width: 157px; }
.status-time { width: 101px; }

/* Windows stacked behind the browser */
.back-window { position: absolute; border-radius: 20px; }
.back-far {
  left: -14px; top: 50px; width: 60px; height: 1626px;
  background: linear-gradient(90deg, #c9c9c9 18px, #262626 18px) 0 182px / 100% 118px no-repeat,
    linear-gradient(180deg, #262626 1572px, #2563a8 1572px);
}
.back-near {
  left: 6px; top: 134px; width: 60px; height: 1540px;
  border-left: 1px solid #4c4c4c;
  background: linear-gradient(90deg, #d4d4d4 4px, #202020 4px) 0 180px / 100% 116px no-repeat,
    linear-gradient(180deg, #202020 1481px, #2563a8 1481px);
}

/* Browser window */
.window {
  position: absolute;
  left: 18px; top: 50px;
  width: 2862px; height: 1626px;
  display: flex;
  flex-direction: column;
  overflow: hidden;
  border-radius: 20px;
  background: #fff;
  box-shadow: 0 0 0 1px #000, 0 20px 60px rgba(0, 0, 0, .7);
}
.tabstrip {
  flex: none;
  display: flex;
  align-items: flex-end;
  height: 84px;
  background: #dfe1e5;
  box-shadow: inset 0 2px 0 #f2f3f4;
}
.lights { display: flex; gap: 16px; align-self: center; width: 188px; padding: 2px 0 0 42px; }
.light { width: 24px; height: 24px; border-radius: 50%; }
.light-red { background: #ec6a5e; }
.light-amber { background: #f4bf50; }
.light-green { background: #61c555; }
.tab {
  display: flex;
  align-items: center;
  flex: none;
  width: 188px;
  height: 68px;
  padding-left: 22px;
  position: relative;
  color: #3f4246;
  background: linear-gradient(#80868b, #80868b) right 0 top 15px / 2px 39px no-repeat;
}
.tab-narrow { width: 186px; }
.tab-last { background: none; width: 185px; }
.fav { width: 32px; height: 32px; flex: none; }
.fav-globe { width: 28px; height: 28px; margin: 0 2px; fill: #5f6368; }
.fav-square { width: 26px; height: 26px; margin: 0 3px; border: 3px solid #000; }
.fav-unxd { border: 9px solid #000; background: #000; box-shadow: inset 0 0 0 2px #fff; }
.fav-git { fill: #24292e; }
.fav-z { border-radius: 50%; background: #1f57ea; color: #fff; font: 700 24px/32px "Liberation Sans", sans-serif; text-align: center; }
.fav-ai { display: grid; place-items: center; background: #7ba697; border-radius: 5px; }
.fav-ai svg { fill: #fff; }
.tab-title {
  width: 62px;
  margin-left: 15px;
  white-space: nowrap;
  font-size: 24px;
  letter-spacing: -.4px;
  line-height: 34px;
  -webkit-mask-image: linear-gradient(90deg, #000 36px, transparent 64px);
  mask-image: linear-gradient(90deg, #000 36px, transparent 64px);
}
.tab-close { width: 18px; height: 18px; margin-left: 16px; color: #45494d; }
.tab-narrow .tab-close, .tab-active .tab-close { margin-left: 15px; }
.tab-active {
  background: #fff;
  border-radius: 16px 16px 0 0;
  padding-left: 22px;
  width: 188px;
}
.tab-active::before, .tab-active::after {
  content: "";
  position: absolute;
  bottom: 0;
  width: 16px;
  height: 16px;
}
.tab-active::before { left: -16px; background: radial-gradient(circle at 0 0, transparent 15.500px, #fff 16px); }
.tab-active::after { right: -16px; background: radial-gradient(circle at 100% 0, transparent 15.500px, #fff 16px); }
.tab-new { margin: 0 0 22px 31px; }
.tab-menu { margin: 0 29px 28px auto; }

.toolbar {
  flex: none;
  display: flex;
  align-items: center;
  height: 74px;
  padding: 0 10px 0 30px;
  border-bottom: 2px solid #dadbdc;
  background: #fff;
}
.nav-icon { width: 28px; height: 28px; margin-right: 36px; flex: none; }
.nav-reload { margin-right: 31px; }
.omnibox {
  display: flex;
  align-items: center;
  width: 2251px;
  height: 56px;
  padding: 0 21px 0 26px;
  border-radius: 28px;
  background: #f1f3f4;
}
.url { margin-left: 23px; font-size: 27.600px; letter-spacing: .24px; color: #63676b; white-space: nowrap; }
.url-host { color: #202124; }
.omni-share { margin: 0 37px 0 auto; }
.ext { margin-left: 30px; }
.panel { width: 28px; height: 28px; margin-left: 34px; border: 4px solid #5f6368; border-right-width: 11px; border-radius: 2px; }
.avatar { width: 44px; height: 44px; margin-left: 29px; border-radius: 50%; background: #6f9b45; color: #fff; font-size: 22px; line-height: 44px; text-align: center; }
.update {
  display: flex;
  align-items: center;
  justify-content: space-between;
  width: 176px;
  height: 56px;
  margin-left: auto;
  padding: 0 23px 0 24px;
  border: 2px solid #b83127;
  border-radius: 28px;
  background: #f8eceb;
  color: #b3261e;
  font-size: 26px;
  font-weight: 500;
}
.update-text { letter-spacing: -.2px; }
.dots { display: flex; flex-direction: column; gap: 4px; }
.dots i { width: 6px; height: 6px; border-radius: 50%; background: #c5392d; }

/* Site */
.site-header, .results, .features, .footer { font-family: Lato, "Open Sans", sans-serif; }
.site-header {
  flex: none;
  display: flex;
  align-items: center;
  height: 125px;
  padding: 0 74px 0 70px;
  background: #fff;
  box-shadow: 0 2px 8px rgba(40, 55, 90, .16);
  position: relative;
  z-index: 1;
  white-space: nowrap;
}
.brand { width: 284px; margin-left: 22px; color: #17191f; font: 800 39px/60px Inter, sans-serif; letter-spacing: .2px; }
.search {
  display: flex;
  align-items: center;
  width: 690px;
  height: 80px;
  padding-left: 26px;
  border: 3px solid #dbe1ea;
  border-radius: 40px;
  box-shadow: inset 0 3px 10px rgba(60, 80, 120, .18);
  color: #4a5877;
  font-size: 27px;
}
.query { margin-left: 15px; letter-spacing: .3px; }
.caret { width: 2px; height: 36px; background: #2c3550; }
.switch-label { color: #2b3350; font-size: 32px; line-height: 40px; padding-bottom: 2px; -webkit-text-stroke: .3px currentColor; }
.label-click { width: 274px; margin-left: auto; letter-spacing: .4px; }
.label-debug { width: 216px; letter-spacing: .2px; }
.switch {
  position: relative;
  width: 76px;
  height: 42px;
  margin-right: 41px;
  border: 2px solid #c6ccd4;
  border-radius: 21px;
  background: #7f96a8;
  box-shadow: inset 0 2px 4px rgba(0, 0, 0, .25);
}
.switch::after {
  content: "";
  position: absolute;
  left: 0;
  top: 0;
  width: 38px;
  height: 38px;
  border-radius: 50%;
  background: #fafbfc;
  box-shadow: 0 1px 5px rgba(0, 0, 0, .35);
}
.switch-on { margin-right: 40px; background: #7db487; }
.switch-on::after { left: 34px; }
.back-link { width: 250px; color: #6d8be0; font-size: 30px; letter-spacing: .33px; text-decoration: underline; text-decoration-thickness: 2px; }

.results {
  flex: none;
  height: 408px;
  padding: 38px 199px 0 83px;
  background: #f8f9fb;
  position: relative;
}
.showing { margin: 0; height: 83px; font-size: 28px; line-height: 42px; letter-spacing: .6px; color: #14161c; -webkit-text-stroke: .2px currentColor; }
.results-row { display: flex; align-items: flex-end; gap: 48px; height: 187px; }
.filter {
  display: flex;
  justify-content: space-between;
  width: 524px;
  height: 187px;
  padding: 29px 48px 0 62px;
  border: 2px solid #e6e9ee;
  border-radius: 8px;
  background: #fff;
}
.filter-title { font-size: 32px; line-height: 62px; letter-spacing: .6px; color: #636466; -webkit-text-stroke: .5px currentColor; }
.collapse-btn {
  display: flex;
  justify-content: center;
  width: 48px;
  height: 57px;
  padding-top: 12px;
  border: 2px solid #dce2eb;
  border-radius: 5px;
  color: #b0b9c4;
}
.empty { display: flex; justify-content: center; align-items: flex-start; flex: 1; height: 139px; padding-top: 18px; background: #fff; }
.callout {
  width: 491px;
  height: 107px;
  margin-left: 2px;
  border: 6px solid #ea4025;
  color: #2b3350;
  font-size: 32px;
  line-height: 90px;
  letter-spacing: .57px;
  text-align: center;
  white-space: nowrap;
  -webkit-text-stroke: .3px currentColor;
}
.side-tab {
  position: absolute;
  right: 0;
  top: 11px;
  width: 53px;
  height: 57px;
  padding: 12px 0 0 14px;
  border: 2px solid #dce2eb;
  border-right: 0;
  border-radius: 6px 0 0 6px;
  background: #fcfdfe;
  color: #b0b9c4;
  box-shadow: 0 4px 8px rgba(40, 55, 90, .1);
}

.features {
  flex: none;
  display: grid;
  grid-template-columns: repeat(4, 1fr);
  height: 302px;
  padding: 82px 137px 0 143px;
  border-top: 2px solid #e2e4e8;
  background: #fff;
}
.feature { display: flex; flex-direction: column; align-items: center; gap: 32px; }
.feature-text { font-size: 32px; line-height: 42px; color: #2c2d33; white-space: nowrap; -webkit-text-stroke: .8px currentColor; }
.ft-ship { letter-spacing: .9px; }
.ft-call { letter-spacing: .7px; }
.ft-money { letter-spacing: .42px; }
.ft-return { letter-spacing: .65px; }
.dollar { width: 60px; height: 60px; border-radius: 50%; background: #a3c795; color: #fff; font-size: 42px; line-height: 58px; text-align: center; }

.footer { flex: 1; background: linear-gradient(180deg, #2f3035 560px, #2a2b2f 633px); color: #f5f6f8; white-space: nowrap; }
.footer-cols {
  display: grid;
  grid-template-columns: 448px 328px 306px 606px auto;
  height: 564px;
  padding: 80px 0 0 312px;
}
.footer h3 { margin: 0; color: #fff; font-size: 36px; line-height: 46px; font-weight: 700; letter-spacing: .93px; -webkit-text-stroke: .6px currentColor; }
.col { display: flex; flex-direction: column; }
.col h3 { margin-bottom: 39px; }
.col a { font-size: 28px; line-height: 50px; letter-spacing: .23px; -webkit-text-stroke: .2px currentColor; }
.footer .h-app { margin-bottom: 40px; letter-spacing: .77px; }
.footer .h-touch { margin: 81px 0 0; letter-spacing: .8px; }
.badges { display: flex; gap: 20px; }
.badge { display: flex; align-items: center; height: 75px; border: 2px solid #6d6e73; border-radius: 8px; color: #6d6e73; -webkit-text-stroke: .5px currentColor; }
.badge-play { width: 248px; padding-left: 17px; }
.badge-store { width: 246px; padding-left: 17px; }
.badge-text { display: flex; flex-direction: column; }
.badge-play .badge-text { margin-left: 14px; }
.badge-store .badge-text { margin-left: 11px; }
.badge small { font-size: 17px; line-height: 18px; }
.store-small { letter-spacing: .4px; }
.play-big, .store-big { font-size: 32px; line-height: 36px; letter-spacing: -1px; }
.store-big { letter-spacing: -.5px; }
.social { display: flex; align-items: flex-start; padding-top: 56px; }
.soc { display: grid; place-items: center; width: 80px; height: 80px; border-radius: 50%; background: #a9adb7; color: #2f3036; }
.soc-in { margin: 4px 52px 0 2px; font: 700 60px/72px "Liberation Sans", sans-serif; letter-spacing: -1px; }
.soc-yt { margin: 2px 0 0 54px; }
.rule { height: 2px; margin: 0 137px 0 143px; border: 0; background: #8492b0; }
.concern { margin: 30px 0 0 308px; font-size: 32px; line-height: 44px; letter-spacing: .12px; }
.concern u { text-decoration-thickness: 2px; text-underline-offset: 1px; }

/* Dock */
.dock {
  position: absolute;
  left: 76px; top: 1678px;
  display: flex;
  gap: 22px;
  width: 2727px;
  height: 112px;
  padding: 15px 14px 0 15px;
  border: 2px solid rgba(255, 255, 255, .2);
  border-radius: 34px;
  background: linear-gradient(90deg, #5d5680 0%, #61568d 30%, #6a56a6 48%, #7757b4 60%, #9057d0 70%, #8a57c6 76%, #7a57c4 86%, #7557b4 100%);
}
.app { position: relative; flex: none; width: 72px; height: 72px; }
.app svg { display: block; width: 72px; height: 72px; filter: drop-shadow(0 1px 2px rgba(0, 0, 0, .3)); }
.app.on::after {
  content: "";
  position: absolute;
  left: 31px;
  top: 83px;
  width: 8px;
  height: 8px;
  border-radius: 50%;
  background: #06002f;
}
.count {
  position: absolute;
  right: -9px;
  top: -9px;
  min-width: 34px;
  height: 34px;
  padding: 0 5px;
  border-radius: 17px;
  background: #e8503f;
  color: #fff;
  font-size: 18px;
  font-weight: 400;
  line-height: 34px;
  text-align: center;
}
.calendar { display: flex; flex-direction: column; align-items: center; border-radius: 16px; overflow: hidden; background: #fbfaf9; }
.cal-month { width: 72px; height: 22px; background: #e5604f; color: #fff; font-size: 16px; font-weight: 500; line-height: 24px; text-align: center; }
.cal-day { color: #232323; font-size: 43px; font-weight: 300; line-height: 46px; }
.tv-text { position: absolute; left: 33px; top: 16px; color: #fff; font-size: 30px; font-weight: 500; line-height: 40px; }
.zoom-text { position: absolute; left: 0; top: 15px; width: 72px; color: #fff; font-size: 20px; font-weight: 600; line-height: 40px; letter-spacing: -.6px; text-align: center; }
.app .trash { height: 82px; margin-top: -6px; }
.dock-sep { width: 20px; height: 84px; margin-top: -2px; background: linear-gradient(#4d2399, #4d2399) center / 2px 100% no-repeat; }
```
